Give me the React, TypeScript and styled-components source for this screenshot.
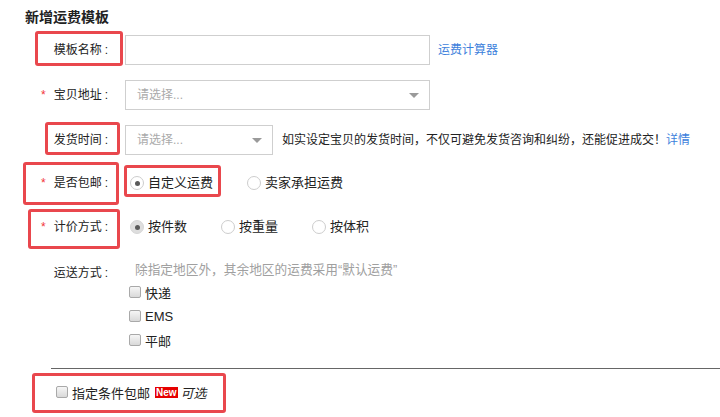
import React from "react";
import styled, { createGlobalStyle } from "styled-components";

const Global = createGlobalStyle`
  html, body { margin: 0; padding: 0; background: #fff; }
  body {
    font-family: "Liberation Sans", "Noto Sans CJK SC", sans-serif;
    color: #222;
    font-size: 12px;
  }
`;

const Page = styled.div`
  width: 720px;
  height: 417px;
  overflow: hidden;
  box-sizing: border-box;
  padding: 7px 0 0 25px;
`;

const Title = styled.div`
  margin: 0;
  font-size: 14px;
  line-height: 20px;
  font-weight: bold;
  color: #222;
`;

const Row = styled.div<{ $mt: number; $h?: number }>`
  position: relative;
  display: flex;
  align-items: center;
  margin-top: ${(p) => p.$mt}px;
  height: ${(p) => p.$h ?? 30}px;
`;

const BlockRow = styled.div<{ $mt: number }>`
  display: flex;
  align-items: flex-start;
  margin-top: ${(p) => p.$mt}px;
`;

const Label = styled.div<{ $pt?: number }>`
  width: 83px;
  flex: none;
  text-align: right;
  font-size: 12px;
  line-height: 18px;
  color: #222;
  padding-top: ${(p) => p.$pt ?? 0}px;
  white-space: nowrap;
`;

const Star = styled.span`
  color: #f2353a;
  margin-right: 8px;
`;

const Colon = styled.span`
  margin-left: 3px;
`;

const Control = styled.div`
  margin-left: 17px;
  display: flex;
  align-items: center;
`;

const TextInput = styled.div`
  width: 305px;
  height: 30px;
  box-sizing: border-box;
  border: 1px solid #cfcfcf;
  background: #fff;
`;

const Select = styled.div<{ $w: number }>`
  width: ${(p) => p.$w}px;
  height: 30px;
  box-sizing: border-box;
  border: 1px solid #cfcfcf;
  background: #fff;
  display: flex;
  align-items: center;
  justify-content: space-between;
  padding: 0 10px 0 11px;
`;

const Placeholder = styled.span`
  color: #aaa;
  font-size: 12px;
  line-height: 18px;
`;

const Caret = styled.span`
  width: 0;
  height: 0;
  border-left: 5px solid transparent;
  border-right: 5px solid transparent;
  border-top: 5px solid #9a9a9a;
`;

const Link = styled.a`
  color: #3d7fdc;
  font-size: 12px;
  line-height: 18px;
  text-decoration: none;
  margin-left: 8px;
`;

const Hint = styled.span`
  margin-left: 9px;
  font-size: 12px;
  line-height: 18px;
  color: #222;
  white-space: nowrap;
`;

const InlineLink = styled.span`
  color: #3d7fdc;
`;

const Options = styled.div`
  display: flex;
  align-items: center;
  padding-left: 5px;
`;

const Option = styled.label`
  display: inline-flex;
  align-items: center;
  gap: 4px;
  margin-right: 34px;
  font-size: 13px;
  line-height: 18px;
  color: #222;
`;

const Radio = styled.span<{ $checked?: boolean; $filled?: boolean }>`
  width: 14px;
  height: 14px;
  box-sizing: border-box;
  border-radius: 50%;
  border: 1px solid ${(p) => (p.$filled ? "#d6d6d6" : "#cdcdcd")};
  background: ${(p) => (p.$filled ? "#dedede" : "#fff")};
  display: inline-flex;
  align-items: center;
  justify-content: center;
  &::after {
    content: "";
    display: ${(p) => (p.$checked ? "block" : "none")};
    width: 5px;
    height: 5px;
    border-radius: 50%;
    background: #5a5a5a;
  }
`;

const Shipping = styled.div`
  margin-left: 17px;
  display: flex;
  flex-direction: column;
`;

const ShipHint = styled.div`
  padding-left: 10px;
  font-size: 12.7px;
  line-height: 20px;
  color: #a0a0a0;
  white-space: nowrap;
`;

const Check = styled.label`
  display: flex;
  align-items: center;
  gap: 4px;
  height: 24px;
  padding-left: 4px;
  font-size: 13px;
  color: #222;
`;

const Box = styled.span`
  width: 12px;
  height: 12px;
  box-sizing: border-box;
  border: 1px solid #a9a9a9;
  border-radius: 2px;
  background: linear-gradient(#f6f6f6, #d9d9d9);
`;

const Divider = styled.hr`
  margin: 16px 0 0 26px;
  border: none;
  border-top: 1px solid #666;
  height: 0;
`;

const FreeRow = styled.div`
  position: relative;
  display: flex;
  align-items: center;
  margin-top: 11px;
  height: 24px;
  padding-left: 31px;
  font-size: 13px;
  color: #222;
`;

const FreeCheck = styled.label`
  display: flex;
  align-items: center;
  gap: 4px;
`;

const NewBadge = styled.span`
  margin-left: 5px;
  background: #e60000;
  color: #fff;
  font-family: "Liberation Sans", Arial, sans-serif;
  font-weight: bold;
  font-size: 10px;
  line-height: 11px;
  height: 11px;
  padding: 0 1px;
`;

const Optional = styled.em`
  margin-left: 3px;
  font-style: italic;
`;

const Mark = styled.span<{ $l: number; $t: number; $w: number; $h: number }>`
  position: absolute;
  left: ${(p) => p.$l}px;
  top: ${(p) => p.$t}px;
  width: ${(p) => p.$w}px;
  height: ${(p) => p.$h}px;
  box-sizing: border-box;
  border: 3px solid #e9474d;
  border-radius: 3px;
  pointer-events: none;
`;

const FieldLabel = ({ text, required }: { text: string; required?: boolean }) => (
  <>
    {required && <Star>*</Star>}
    {text}
    <Colon>:</Colon>
  </>
);

export default function App() {
  return (
    <>
      <Global />
      <Page>
        <Title>新增运费模板</Title>

        <Row $mt={8}>
          <Label>
            <FieldLabel text="模板名称" />
          </Label>
          <Control>
            <TextInput />
            <Link>运费计算器</Link>
          </Control>
          <Mark $l={10} $t={-4} $w={88} $h={35} />
        </Row>

        <Row $mt={15}>
          <Label>
            <FieldLabel text="宝贝地址" required />
          </Label>
          <Control>
            <Select $w={305}>
              <Placeholder>请选择...</Placeholder>
              <Caret />
            </Select>
          </Control>
        </Row>

        <Row $mt={15}>
          <Label>
            <FieldLabel text="发货时间" />
          </Label>
          <Control>
            <Select $w={148}>
              <Placeholder>请选择...</Placeholder>
              <Caret />
            </Select>
            <Hint>
              如实设定宝贝的发货时间，不仅可避免发货咨询和纠纷，还能促进成交！<InlineLink>详情</InlineLink>
            </Hint>
          </Control>
          <Mark $l={20} $t={-3} $w={75} $h={33} />
        </Row>

        <Row $mt={13}>
          <Label>
            <FieldLabel text="是否包邮" required />
          </Label>
          <Control>
            <Options>
              <Option>
                <Radio $checked />
                自定义运费
              </Option>
              <Option>
                <Radio />
                卖家承担运费
              </Option>
            </Options>
          </Control>
          <Mark $l={-2} $t={-6} $w={96} $h={43} />
          <Mark $l={99} $t={-3} $w={97} $h={32} />
        </Row>

        <Row $mt={14}>
          <Label>
            <FieldLabel text="计价方式" required />
          </Label>
          <Control>
            <Options>
              <Option>
                <Radio $checked $filled />
                按件数
              </Option>
              <Option>
                <Radio />
                按重量
              </Option>
              <Option>
                <Radio />
                按体积
              </Option>
            </Options>
          </Control>
          <Mark $l={3} $t={-3} $w={92} $h={40} />
        </Row>

        <BlockRow $mt={18}>
          <Label $pt={4}>
            <FieldLabel text="运送方式" />
          </Label>
          <Shipping>
            <ShipHint>除指定地区外，其余地区的运费采用“默认运费”</ShipHint>
            <Check>
              <Box />
              快递
            </Check>
            <Check>
              <Box />
              EMS
            </Check>
            <Check>
              <Box />
              平邮
            </Check>
          </Shipping>
        </BlockRow>

        <Divider />

        <FreeRow>
          <FreeCheck>
            <Box />
            指定条件包邮
          </FreeCheck>
          <NewBadge>New</NewBadge>
          <Optional>可选</Optional>
          <Mark $l={7} $t={-7} $w={194} $h={40} />
        </FreeRow>
      </Page>
    </>
  );
}
